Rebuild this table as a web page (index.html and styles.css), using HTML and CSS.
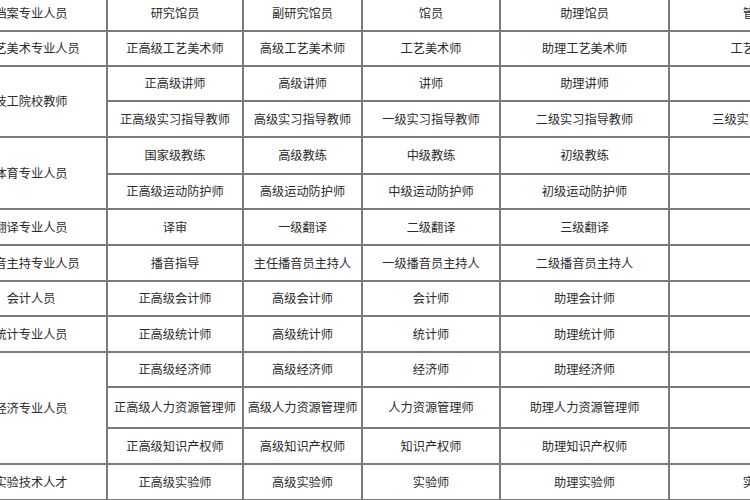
FILE: index.html
```html
<!DOCTYPE html>
<html lang="zh-CN">
<head>
<meta charset="utf-8">
<title>职称对照表</title>
<link rel="stylesheet" href="styles.css">
</head>
<body>
<div class="viewport">
<table class="titles">
  <colgroup>
    <col class="c0"><col class="c1"><col class="c2"><col class="c3"><col class="c4"><col class="c5">
  </colgroup>
  <tbody>
    <tr class="h36"><td>档案专业人员</td><td>研究馆员</td><td>副研究馆员</td><td>馆员</td><td>助理馆员</td><td>管理员</td></tr>
    <tr class="h35"><td>工艺美术专业人员</td><td>正高级工艺美术师</td><td>高级工艺美术师</td><td>工艺美术师</td><td>助理工艺美术师</td><td>工艺美术员</td></tr>
    <tr class="h35"><td rowspan="2">技工院校教师</td><td>正高级讲师</td><td>高级讲师</td><td>讲师</td><td>助理讲师</td><td></td></tr>
    <tr class="h36"><td>正高级实习指导教师</td><td>高级实习指导教师</td><td>一级实习指导教师</td><td>二级实习指导教师</td><td>三级实习指导教师</td></tr>
    <tr class="h37"><td rowspan="2">体育专业人员</td><td>国家级教练</td><td>高级教练</td><td>中级教练</td><td>初级教练</td><td></td></tr>
    <tr class="h35"><td>正高级运动防护师</td><td>高级运动防护师</td><td>中级运动防护师</td><td>初级运动防护师</td><td></td></tr>
    <tr class="h36"><td>翻译专业人员</td><td>译审</td><td>一级翻译</td><td>二级翻译</td><td>三级翻译</td><td></td></tr>
    <tr class="h36"><td>播音主持专业人员</td><td>播音指导</td><td>主任播音员主持人</td><td>一级播音员主持人</td><td>二级播音员主持人</td><td></td></tr>
    <tr class="h35"><td>会计人员</td><td>正高级会计师</td><td>高级会计师</td><td>会计师</td><td>助理会计师</td><td></td></tr>
    <tr class="h36"><td>统计专业人员</td><td>正高级统计师</td><td>高级统计师</td><td>统计师</td><td>助理统计师</td><td></td></tr>
    <tr class="h35"><td rowspan="3">经济专业人员</td><td>正高级经济师</td><td>高级经济师</td><td>经济师</td><td>助理经济师</td><td></td></tr>
    <tr class="h41"><td>正高级人力资源管理师</td><td>高级人力资源管理师</td><td>人力资源管理师</td><td>助理人力资源管理师</td><td></td></tr>
    <tr class="h36"><td>正高级知识产权师</td><td>高级知识产权师</td><td>知识产权师</td><td>助理知识产权师</td><td></td></tr>
    <tr class="h36"><td>实验技术人才</td><td>正高级实验师</td><td>高级实验师</td><td>实验师</td><td>助理实验师</td><td>实验员</td></tr>
  </tbody>
</table>
</div>
</body>
</html>
```
FILE: styles.css
```css
html, body {
  margin: 0;
  padding: 0;
  background: #ffffff;
}
.viewport {
  width: 750px;
  height: 500px;
  overflow: hidden;
}
.titles {
  margin-left: -46px;
  margin-top: -6px;
  border-collapse: collapse;
  table-layout: fixed;
  width: 898px;
  font-family: "Noto Sans CJK SC", "Noto Sans", sans-serif;
  font-size: 12.2px;
  color: #2b2b2b;
}
.c0 { width: 152px; }
.c1 { width: 136px; }
.c2 { width: 119px; }
.c3 { width: 138px; }
.c4 { width: 169px; }
.c5 { width: 184px; }
.titles td {
  border: 2px solid #7a7a7a;
  text-align: center;
  vertical-align: middle;
  padding: 0;
  white-space: nowrap;
  line-height: 1;
}
.h35 { height: 35px; }
.h36 { height: 36px; }
.h37 { height: 37px; }
.h41 { height: 41px; }
```
